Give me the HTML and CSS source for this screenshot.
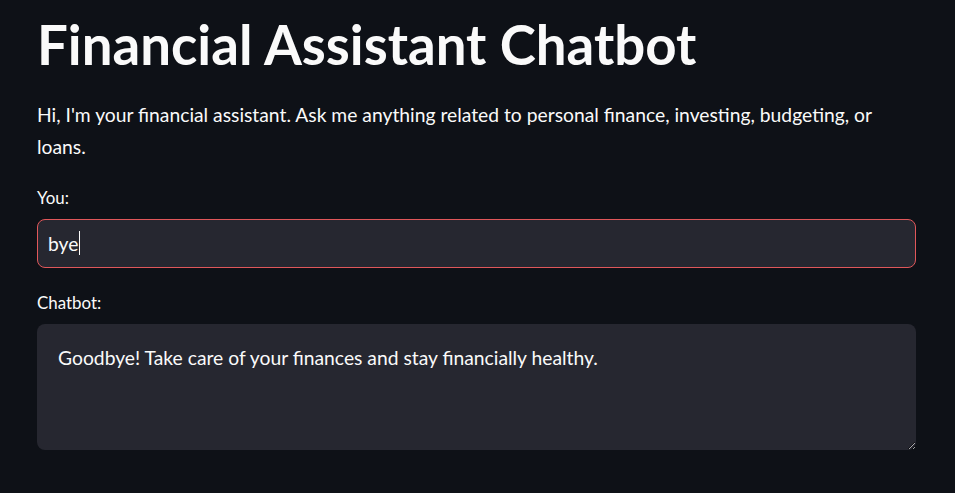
FILE: index.html
```
<!DOCTYPE html>
<html>
<head>
<meta charset="utf-8">
<link rel="stylesheet" href="styles.css">
</head>
<body>
<main class="app">
  <h1 class="title">Financial Assistant Chatbot</h1>
  <p class="intro">Hi, I'm your financial assistant. Ask me anything related to personal finance, investing, budgeting, or loans.</p>
  <div class="field">
    <label class="label">You:</label>
    <div class="input"><span class="value">bye</span><span class="caret"></span></div>
  </div>
  <div class="field">
    <label class="label">Chatbot:</label>
    <textarea class="area" readonly>Goodbye! Take care of your finances and stay financially healthy.</textarea>
  </div>
</main>
</body>
</html>
```
FILE: styles.css
```
html, body {
  margin: 0;
  padding: 0;
  background: #0e1117;
  height: 100%;
  overflow: hidden;
}
body {
  font-family: "Lato", "Liberation Sans", sans-serif;
  color: #fafafa;
}
.app {
  width: 879px;
  margin-left: 37px;
  padding-top: 11px;
  display: flex;
  flex-direction: column;
}
.title {
  margin: 0;
  font-size: 54.6px;
  font-weight: 700;
  line-height: 66px;
}
.intro {
  margin: 21.5px 0 0 0;
  font-size: 19.3px;
  line-height: 32px;
}
.field {
  display: flex;
  flex-direction: column;
  margin-top: 24px;
}
.label {
  font-size: 16.9px;
  line-height: 22px;
  margin-bottom: 10px;
}
.input {
  box-sizing: border-box;
  height: 49px;
  border: 1px solid #e0575a;
  border-radius: 8px;
  background: #262730;
  display: flex;
  align-items: center;
  padding: 0 10px;
  font-size: 19.3px;
}
.caret {
  display: inline-block;
  width: 1px;
  height: 24px;
  background: #fafafa;
  margin-left: 1px;
}
.area {
  box-sizing: border-box;
  height: 126px;
  width: 100%;
  border: none;
  border-radius: 8px;
  background: #262730;
  color: #fafafa;
  font-family: "Lato", "Liberation Sans", sans-serif;
  font-size: 19.3px;
  line-height: 28px;
  padding: 20.5px 21px;
  resize: vertical;
  outline: none;
  display: block;
}
```
